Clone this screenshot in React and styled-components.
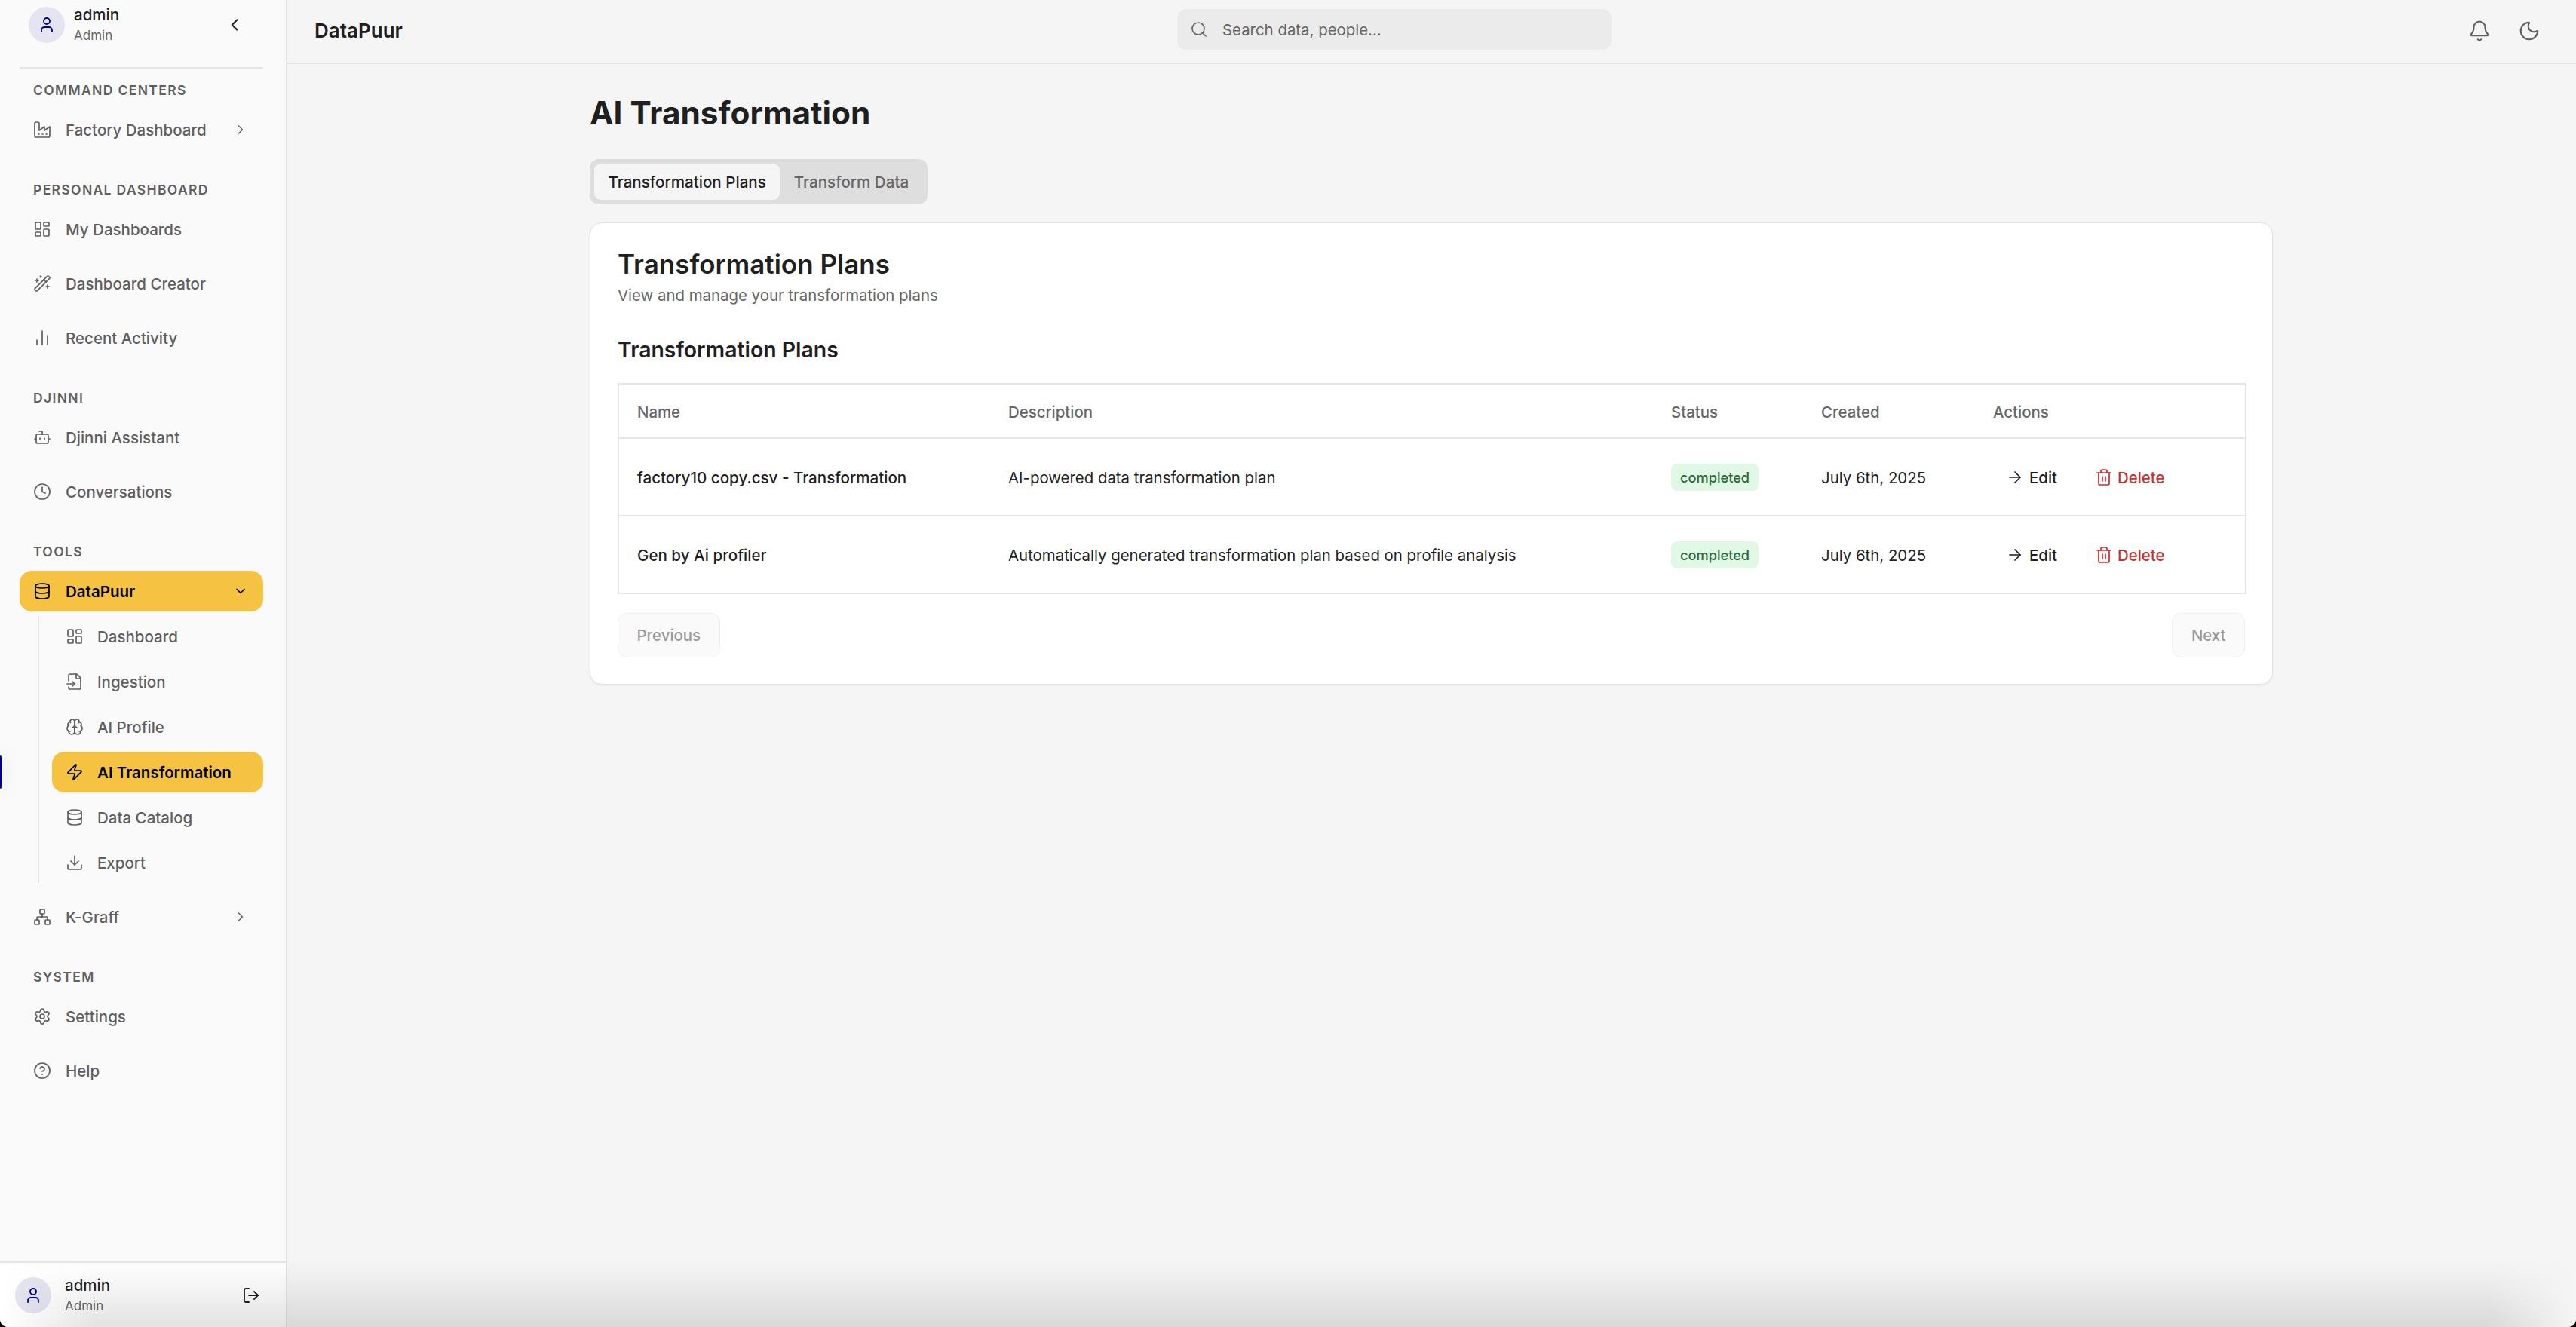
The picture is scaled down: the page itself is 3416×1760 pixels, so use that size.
import React from 'react'
import styled, { createGlobalStyle } from 'styled-components'
import {
  ArrowRight, Bell, Bot, ChartNoAxesColumn, ChevronDown, ChevronLeft, ChevronRight,
  CircleHelp, Clock, Database, Download, FileInput, LayoutDashboard, LogOut, Moon,
  Network, Search, Settings, Trash2, User, WandSparkles, Zap,
} from 'lucide-react'

const GlobalStyle = createGlobalStyle`
  html, body {
    margin: 0;
    padding: 0;
    background: #f5f5f5;
  }
  body {
    font-family: Inter, "Noto Sans", sans-serif;
    color: #1f1f1f;
  }
  * { box-sizing: border-box; }
`

const plans = [
  { name: 'factory10 copy.csv - Transformation', description: 'AI-powered data transformation plan' },
  { name: 'Gen by Ai profiler', description: 'Automatically generated transformation plan based on profile analysis' },
]

// the factory glyph with the saw-tooth roof and three dots
function FactoryIcon({ size, strokeWidth }) {
  return (
    <svg width={size} height={size} viewBox="0 0 24 24" fill="none" stroke="currentColor" strokeWidth={strokeWidth} strokeLinecap="round" strokeLinejoin="round">
      <path d="M2 20a2 2 0 0 0 2 2h16a2 2 0 0 0 2-2V8l-7 5V8l-7 5V4a2 2 0 0 0-2-2H4a2 2 0 0 0-2 2Z" />
      <path d="M17 18h1" />
      <path d="M12 18h1" />
      <path d="M7 18h1" />
    </svg>
  )
}

// two-lobed brain, the package's current one is drawn differently
function BrainIcon({ size, strokeWidth }) {
  return (
    <svg width={size} height={size} viewBox="0 0 24 24" fill="none" stroke="currentColor" strokeWidth={strokeWidth} strokeLinecap="round" strokeLinejoin="round">
      <path d="M12 5a3 3 0 1 0-5.997.125 4 4 0 0 0-2.526 5.77 4 4 0 0 0 .556 6.588A4 4 0 1 0 12 18Z" />
      <path d="M12 5a3 3 0 1 1 5.997.125 4 4 0 0 1 2.526 5.77 4 4 0 0 1-.556 6.588A4 4 0 1 1 12 18Z" />
      <path d="M15 13a4.5 4.5 0 0 1-3-4 4.5 4.5 0 0 1-3 4" />
      <path d="M17.599 6.5a3 3 0 0 0 .399-1.375" />
      <path d="M6.003 5.125A3 3 0 0 0 6.401 6.5" />
      <path d="M3.477 10.896a4 4 0 0 1 .585-.396" />
      <path d="M19.938 10.5a4 4 0 0 1 .585.396" />
      <path d="M6 18a4 4 0 0 1-1.967-.516" />
      <path d="M19.967 17.484A4 4 0 0 1 18 18" />
    </svg>
  )
}

const subItems = [
  { label: 'Dashboard', icon: LayoutDashboard },
  { label: 'Ingestion', icon: FileInput },
  { label: 'AI Profile', icon: BrainIcon },
  { label: 'AI Transformation', icon: Zap, active: true },
  { label: 'Data Catalog', icon: Database },
  { label: 'Export', icon: Download },
]

function NavItem({ icon: Icon, label, active, chevron }) {
  return (
    <Item $active={active}>
      <Icon size={24} strokeWidth={1.7} />
      <ItemLabel>{label}</ItemLabel>
      {chevron === 'right' && <ChevronRight size={20} strokeWidth={1.7} />}
      {chevron === 'down' && <ChevronDown size={20} strokeWidth={2} />}
    </Item>
  )
}

export default function App() {
  return (
    <Page>
      <GlobalStyle />
      <Sidebar>
        <SideHead>
          <Avatar><User size={24} strokeWidth={1.8} /></Avatar>
          <UserText>
            <UserName>admin</UserName>
            <UserRole>Admin</UserRole>
          </UserText>
          <ChevronLeft size={26} strokeWidth={2} color="#1f1f1f" />
        </SideHead>

        <Nav>
          <Section>
            <SectionLabel>COMMAND CENTERS</SectionLabel>
            <NavItem icon={FactoryIcon} label="Factory Dashboard" chevron="right" />
          </Section>
          <Section>
            <SectionLabel>PERSONAL DASHBOARD</SectionLabel>
            <NavItem icon={LayoutDashboard} label="My Dashboards" />
            <NavItem icon={WandSparkles} label="Dashboard Creator" />
            <NavItem icon={ChartNoAxesColumn} label="Recent Activity" />
          </Section>
          <Section>
            <SectionLabel>DJINNI</SectionLabel>
            <NavItem icon={Bot} label="Djinni Assistant" />
            <NavItem icon={Clock} label="Conversations" />
          </Section>
          <Section>
            <SectionLabel>TOOLS</SectionLabel>
            <NavItem icon={Database} label="DataPuur" active chevron="down" />
            <SubList>
              {subItems.map((it) => (
                <SubItem key={it.label} $active={it.active}>
                  <it.icon size={24} strokeWidth={1.7} />
                  <span>{it.label}</span>
                </SubItem>
              ))}
            </SubList>
            <NavItem icon={Network} label="K-Graff" chevron="right" />
          </Section>
          <Section>
            <SectionLabel>SYSTEM</SectionLabel>
            <NavItem icon={Settings} label="Settings" />
            <NavItem icon={CircleHelp} label="Help" />
          </Section>
        </Nav>

        <SideFoot>
          <Avatar><User size={24} strokeWidth={1.8} /></Avatar>
          <UserText>
            <UserName>admin</UserName>
            <UserRole>Admin</UserRole>
          </UserText>
          <LogOut size={24} strokeWidth={1.8} color="#1f1f1f" />
        </SideFoot>
      </Sidebar>

      <Marker />

      <Main>
        <TopBar>
          <Brand>DataPuur</Brand>
          <SearchBox>
            <Search size={24} strokeWidth={1.7} />
            <span>Search data, people...</span>
          </SearchBox>
          <TopIcons>
            <Bell size={30} strokeWidth={1.7} />
            <Moon size={30} strokeWidth={1.7} />
          </TopIcons>
        </TopBar>

        <Content>
          <Title>AI Transformation</Title>
          <Tabs>
            <Tab $active>Transformation Plans</Tab>
            <Tab>Transform Data</Tab>
          </Tabs>

          <Card>
            <CardTitle>Transformation Plans</CardTitle>
            <CardSub>View and manage your transformation plans</CardSub>
            <TableTitle>Transformation Plans</TableTitle>

            <Table>
              <colgroup>
                <col width="493" />
                <col width="879" />
                <col width="199" />
                <col width="228" />
                <col width="359" />
              </colgroup>
              <thead>
                <tr>
                  <Th>Name</Th>
                  <Th>Description</Th>
                  <Th>Status</Th>
                  <Th>Created</Th>
                  <Th>Actions</Th>
                </tr>
              </thead>
              <tbody>
                {plans.map((p) => (
                  <tr key={p.name}>
                    <NameCell>{p.name}</NameCell>
                    <Td>{p.description}</Td>
                    <Td><Badge>completed</Badge></Td>
                    <Td>July 6th, 2025</Td>
                    <Td>
                      <Actions>
                        <EditLink><ArrowRight size={24} strokeWidth={1.7} />Edit</EditLink>
                        <DeleteLink><Trash2 size={24} strokeWidth={1.7} />Delete</DeleteLink>
                      </Actions>
                    </Td>
                  </tr>
                ))}
              </tbody>
            </Table>

            <Pager>
              <PageButton>Previous</PageButton>
              <PageButton>Next</PageButton>
            </Pager>
          </Card>
        </Content>
      </Main>

      <WindowShade />
    </Page>
  )
}

const Page = styled.div`
  position: relative;
  display: flex;
  width: 3416px;
  height: 1760px;
  overflow: hidden;
  background: #f5f5f5;

  /* dark rounded corners of the captured window */
  &::before, &::after {
    content: '';
    position: absolute;
    z-index: 2;
    bottom: 0;
    width: 10px;
    height: 10px;
  }
  &::before {
    left: 0;
    background: radial-gradient(circle at 100% 0, transparent 9.5px, #000 10.5px);
  }
  &::after {
    right: 0;
    background: radial-gradient(circle at 0 0, transparent 9.5px, #000 10.5px);
  }
`

const Sidebar = styled.aside`
  width: 380px;
  flex: none;
  display: flex;
  flex-direction: column;
  background: #fafafa;
  border-right: 1px solid #e0e0e0;
`

const SideHead = styled.div`
  height: 91px;
  flex: none;
  margin: 0 30px 0 26px;
  padding: 0 0 24px 12px;
  display: flex;
  align-items: center;
  gap: 12px;
  border-bottom: 2px solid #e5e5e5;
  & > svg { margin-right: 25px; }
`

const Avatar = styled.div`
  width: 48px;
  height: 48px;
  flex: none;
  border-radius: 50%;
  background: #e5e5f2;
  color: #000091;
  display: flex;
  align-items: center;
  justify-content: center;
`

const UserText = styled.div`
  flex: 1;
  display: flex;
  flex-direction: column;
  gap: 2px;
  padding-top: 1px;
`

const UserName = styled.div`
  font-size: 20.5px;
  line-height: 26px;
  font-weight: 500;
  color: #1f1f1f;
`

const UserRole = styled.div`
  font-size: 17px;
  line-height: 24px;
  color: #666;
`

const Nav = styled.nav`
  flex: 1;
  padding: 17px 30px 0 26px;
  display: flex;
  flex-direction: column;
  gap: 41px;
`

const Section = styled.section`
  display: flex;
  flex-direction: column;
  gap: 18px;
`

const SectionLabel = styled.div`
  font-size: 17.5px;
  line-height: 24px;
  font-weight: 600;
  letter-spacing: 1.35px;
  color: #5f5f5f;
  padding-left: 18px;
  margin-bottom: -5px;
`

const Item = styled.div`
  height: 54px;
  display: flex;
  align-items: center;
  gap: 19px;
  padding: 0 20px 0 18px;
  border-radius: 16px;
  font-size: 20.5px;
  font-weight: ${(p) => (p.$active ? 600 : 500)};
  color: ${(p) => (p.$active ? '#000' : '#5f5f5f')};
  background: ${(p) => (p.$active ? '#f5c242' : 'transparent')};
`

const ItemLabel = styled.span`
  flex: 1;
`

const SubList = styled.div`
  margin: -12px 0 0 24px;
  padding-left: 17px;
  border-left: 2px solid #e2e2e2;
  display: flex;
  flex-direction: column;
  gap: 6px;
`

const SubItem = styled.div`
  height: 54px;
  display: flex;
  align-items: center;
  gap: 18px;
  padding-left: 18px;
  border-radius: 16px;
  font-size: 20.5px;
  font-weight: ${(p) => (p.$active ? 600 : 500)};
  color: ${(p) => (p.$active ? '#000' : '#5f5f5f')};
  background: ${(p) => (p.$active ? '#f5c242' : 'transparent')};
`

const SideFoot = styled.div`
  height: 87px;
  flex: none;
  display: flex;
  align-items: center;
  gap: 18px;
  padding: 0 34px 0 20px;
  background: #fff;
  border-top: 2px solid #e5e5e5;
`

const Marker = styled.div`
  position: absolute;
  left: 0;
  top: 1002px;
  width: 2px;
  height: 44px;
  border-radius: 0 2px 2px 0;
  background: #000091;
  box-shadow: 0 0 24px 6px rgba(0, 0, 145, 0.05);
`

const Main = styled.main`
  flex: 1;
  min-width: 0;
`

const TopBar = styled.header`
  position: relative;
  height: 85px;
  display: flex;
  align-items: center;
  justify-content: space-between;
  padding: 0 47px 0 37px;
  border-bottom: 2px solid #e5e5e5;
`

const Brand = styled.div`
  font-size: 26px;
  font-weight: 600;
  color: #1f1f1f;
  margin-top: -2px;
`

const SearchBox = styled.div`
  position: absolute;
  left: 1181px;
  top: 12px;
  width: 576px;
  height: 54px;
  display: flex;
  align-items: center;
  gap: 19px;
  padding-left: 17px;
  border-radius: 12px;
  background: #ebebeb;
  color: #666;
  font-size: 20.4px;
`

const TopIcons = styled.div`
  display: flex;
  align-items: center;
  gap: 36px;
  color: #5f5f5f;
  margin-top: -2px;
`

const Content = styled.div`
  width: 2232px;
  margin: 0 0 0 402px;
  padding-top: 38px;
`

const Title = styled.h1`
  margin: 0;
  font-size: 42.3px;
  line-height: 54px;
  font-weight: 700;
  color: #1f1f1f;
`

const Tabs = styled.div`
  display: inline-flex;
  margin-top: 34px;
  padding: 6px;
  border-radius: 12px;
  background: #dedede;
  vertical-align: top;
`

const Tab = styled.div`
  height: 48px;
  display: flex;
  align-items: center;
  padding: 0 18.5px;
  border-radius: 9px;
  font-size: 20.6px;
  font-weight: 500;
  color: ${(p) => (p.$active ? '#1f1f1f' : '#666')};
  background: ${(p) => (p.$active ? '#f5f5f5' : 'transparent')};
`

const Card = styled.div`
  margin-top: 24px;
  height: 613px;
  padding: 34px 36px;
  background: #fff;
  border: 1px solid #e2e2e2;
  border-radius: 16px;
  box-shadow: 0 1px 3px rgba(0, 0, 0, 0.06);
`

const CardTitle = styled.h2`
  margin: 0;
  font-size: 35px;
  line-height: 40px;
  font-weight: 600;
  color: #1f1f1f;
`

const CardSub = styled.p`
  margin: 7px 0 0;
  font-size: 20.4px;
  line-height: 30px;
  color: #666;
`

const TableTitle = styled.h3`
  margin: 38px 0 0;
  font-size: 28.4px;
  line-height: 38px;
  font-weight: 600;
  color: #1f1f1f;
`

const Table = styled.table`
  width: 2158px;
  margin-top: 25px;
  table-layout: fixed;
  border-collapse: collapse;
  border: 2px solid #e5e5e5;
`

const Th = styled.th`
  height: 72px;
  padding: 2px 24px 0;
  text-align: left;
  font-size: 20.4px;
  font-weight: 500;
  color: #666;
  border-bottom: 2px solid #e5e5e5;
`

const Td = styled.td`
  height: 103px;
  padding: 1px 24px 0;
  font-size: 20.4px;
  color: #1f1f1f;
  border-bottom: 2px solid #e5e5e5;
`

const NameCell = styled(Td)`
  font-weight: 500;
  font-size: 20.6px;
`

const Badge = styled.span`
  display: inline-flex;
  align-items: center;
  height: 36px;
  padding: 0 12px;
  border-radius: 8px;
  font-size: 18.2px;
  font-weight: 500;
  color: #2b6a3a;
  background: #e2f8e6;
`

const Actions = styled.div`
  display: flex;
  align-items: center;
  gap: 50px;
  padding-left: 17px;
`

const EditLink = styled.span`
  display: flex;
  align-items: center;
  gap: 7px;
  font-weight: 500;
  color: #1f1f1f;
`

const DeleteLink = styled(EditLink)`
  gap: 6px;
  color: #c9302c;
`

const Pager = styled.div`
  display: flex;
  justify-content: space-between;
  margin-top: 25px;
`

const PageButton = styled.div`
  height: 59px;
  display: flex;
  align-items: center;
  padding: 0 24.5px;
  border: 1px solid #efefef;
  border-radius: 12px;
  background: #fafafa;
  font-size: 20.4px;
  font-weight: 500;
  color: #999;
`

// soft shadow along the bottom edge of the captured window
const WindowShade = styled.div`
  position: absolute;
  left: 0;
  right: 0;
  bottom: 0;
  height: 90px;
  pointer-events: none;
  background: linear-gradient(to bottom, rgba(0, 0, 0, 0), rgba(0, 0, 0, 0.05) 50%, rgba(0, 0, 0, 0.115));
  mask-image: linear-gradient(to right, transparent 0, #000 130px, #000 3300px, transparent 3416px);
`
